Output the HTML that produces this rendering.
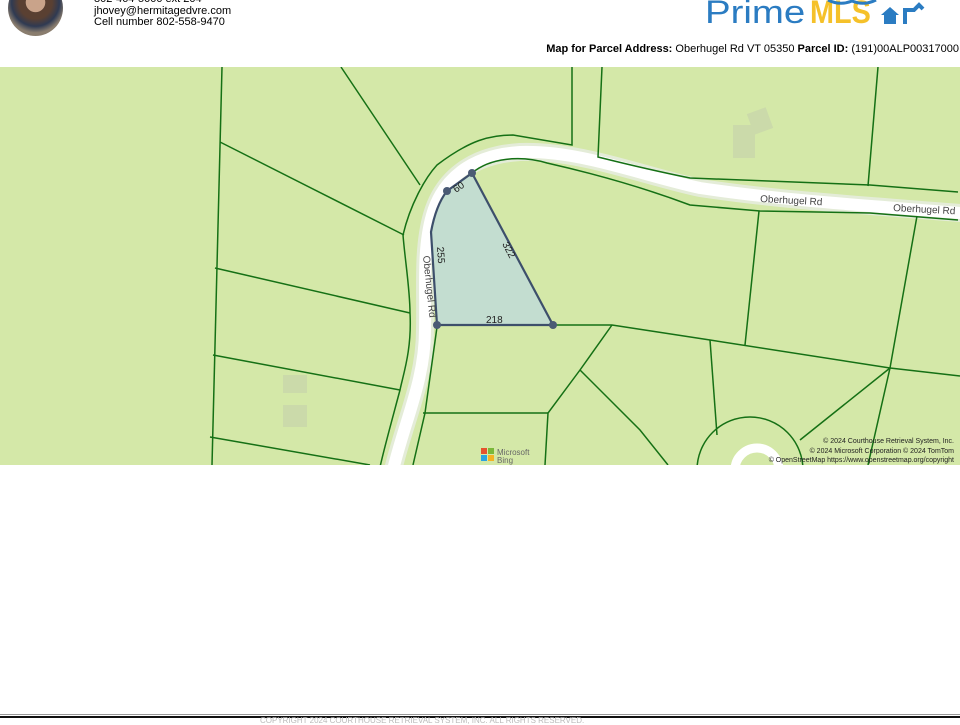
<!DOCTYPE html>
<html><head><meta charset="utf-8"><style>
html,body{margin:0;padding:0;width:960px;height:720px;overflow:hidden;background:#fff;font-family:"Liberation Sans",Arial,sans-serif;}
.abs{position:absolute}
</style></head><body>
<div class="abs" style="left:8px;top:-20px;width:55px;height:56px;border-radius:50%;background:radial-gradient(circle at 50% 40%,#c9a38a 0 22%,#5a4032 23% 38%,#2f3a52 55%,#8a7d6e 70%);"></div>
<div class="abs" style="left:94px;top:-6px;font-size:11px;line-height:11.5px;color:#000;">802-464-5000 ext 204<br>jhovey@hermitagedvre.com<br>Cell number 802-558-9470</div>
<div class="abs" style="left:705px;top:-7px;font-size:32px;line-height:38px;color:#2b7cc2;white-space:nowrap;transform:scaleX(1.2);transform-origin:0 0;">Prime</div>
<div class="abs" style="left:810px;top:-7px;font-size:32px;line-height:38px;color:#f5c12a;font-weight:bold;white-space:nowrap;transform:scaleX(0.9);transform-origin:0 0;">MLS</div>
<svg class="abs" style="left:820px;top:0" width="110" height="28" viewBox="0 0 110 28"><path d="M8 0 Q20 6 32 1 Q44 6 56 0" fill="none" stroke="#2b7cc2" stroke-width="3"/><path d="M61 15 L70 7 L79 15 L76 15 L76 24 L64 24 L64 15 Z" fill="#2b7cc2"/><path d="M85 24 L85 10 L94 10 L99 5 L103 9" fill="none" stroke="#2b7cc2" stroke-width="4"/></svg>
<div class="abs" style="right:1px;top:43px;font-size:11px;color:#000;white-space:nowrap;"><b>Map for Parcel Address:</b> Oberhugel Rd VT 05350 <b>Parcel ID:</b> (191)00ALP00317000</div>
<svg class="abs" style="left:0;top:67px" width="960" height="398" viewBox="0 67 960 398">
<rect x="0" y="67" width="960" height="398" fill="#d4e8a8"/>
<g fill="#c8d6ab" opacity="0.8"><rect x="733" y="125" width="22" height="33"/><rect x="750" y="110" width="20" height="22" transform="rotate(-20 760 121)"/><rect x="283" y="375" width="24" height="18"/><rect x="283" y="405" width="24" height="22"/></g>
<g fill="none" stroke-linecap="round" stroke-linejoin="round">
<path d="M393 470 C405 420 425 380 425 330 C426 290 422 250 432 215 C442 180 470 155 520 152 C580 150 640 175 700 188 C780 200 860 205 960 213" stroke="#e4ecd8" stroke-width="18"/>
<path d="M393 470 C405 420 425 380 425 330 C426 290 422 250 432 215 C442 180 470 155 520 152 C580 150 640 175 700 188 C780 200 860 205 960 213" stroke="#fff" stroke-width="12"/>
<circle cx="757" cy="470" r="22" stroke="#fff" stroke-width="9"/>
</g>
<g fill="none" stroke="#157015" stroke-width="1.5">
<path d="M222 67 L212 465"/>
<path d="M341 67 L420 185"/>
<path d="M220 142 L404 235"/>
<path d="M572 67 L572 145 L513 135 C490 135 470 140 437 165 C425 178 410 205 403 235 C405 260 410 290 410 313 C412 350 403 375 400 390 C392 420 385 445 380 467"/>
<path d="M215 268 L410 313"/>
<path d="M213 355 L400 390"/>
<path d="M210 437 L370 465"/>
<path d="M602 67 L598 157 C630 165 660 172 690 178 L870 185 L958 192"/>
<path d="M878 67 L868 186"/>
<path d="M472 173 C490 158 520 155 547 163 C600 175 650 190 690 205 L760 211 L870 213 L958 220"/>
<path d="M759 211 L745 345"/>
<path d="M917 216 L890 368 L868 465"/>
<path d="M553 325 L612 325 L710 340 L890 368 L960 376"/>
<path d="M710 340 L717 435"/>
<path d="M890 368 L800 440"/>
<path d="M612 325 L580 370 L548 413 L545 465"/>
<path d="M423 413 L548 413"/>
<path d="M437 327 L425 413 L413 465"/>
<path d="M580 370 L640 430 L668 465"/>
<path d="M697 470 A53 53 0 0 1 803 470"/>
</g>
<path d="M472 173 L447 191 Q436 205 431 232 L437 325 L553 325 Z" fill="#c3ddd0" stroke="#3d4f6b" stroke-width="2.2" stroke-linejoin="round"/>
<g fill="#4a5a74"><circle cx="472" cy="173" r="4"/><circle cx="447" cy="191" r="4"/><circle cx="437" cy="325" r="4"/><circle cx="553" cy="325" r="4"/></g>
<g font-family="Liberation Sans,sans-serif" font-size="10" fill="#222">
<text x="486" y="323">218</text>
<text transform="translate(502,244) rotate(62)">322</text>
<text transform="translate(437,247) rotate(86)">255</text>
<text transform="translate(456,193) rotate(-35)">60</text>
<text transform="translate(423,256) rotate(84)" fill="#444">Oberhugel Rd</text>
<text transform="translate(760,202) rotate(3)" fill="#444">Oberhugel Rd</text>
<text transform="translate(893,211) rotate(3)" fill="#444">Oberhugel Rd</text>
</g>
<g><rect x="481" y="448" width="6" height="6" fill="#e5522e"/><rect x="488" y="448" width="6" height="6" fill="#7ab83a"/><rect x="481" y="455" width="6" height="6" fill="#2aa3e0"/><rect x="488" y="455" width="6" height="6" fill="#f4b324"/>
<text x="497" y="455" font-size="8" fill="#666" font-family="Liberation Sans,sans-serif">Microsoft</text><text x="497" y="463" font-size="8" fill="#666" font-family="Liberation Sans,sans-serif">Bing</text></g>
<g font-family="Liberation Sans,sans-serif" font-size="7" fill="#222" text-anchor="end">
<text x="954" y="443">© 2024 Courthouse Retrieval System, Inc.</text>
<text x="954" y="453">© 2024 Microsoft Corporation © 2024 TomTom</text>
<text x="954" y="462">© OpenStreetMap https://www.openstreetmap.org/copyright</text>
</g>
</svg>
<div class="abs" style="left:0;top:714px;width:960px;height:1px;background:#999"></div>
<div class="abs" style="left:0;top:716px;width:960px;height:2px;background:#111"></div>
<div class="abs" style="left:260px;top:716px;font-size:8px;color:#bbb;white-space:nowrap;">COPYRIGHT 2024 COURTHOUSE RETRIEVAL SYSTEM, INC. ALL RIGHTS RESERVED.</div>
</body></html>
